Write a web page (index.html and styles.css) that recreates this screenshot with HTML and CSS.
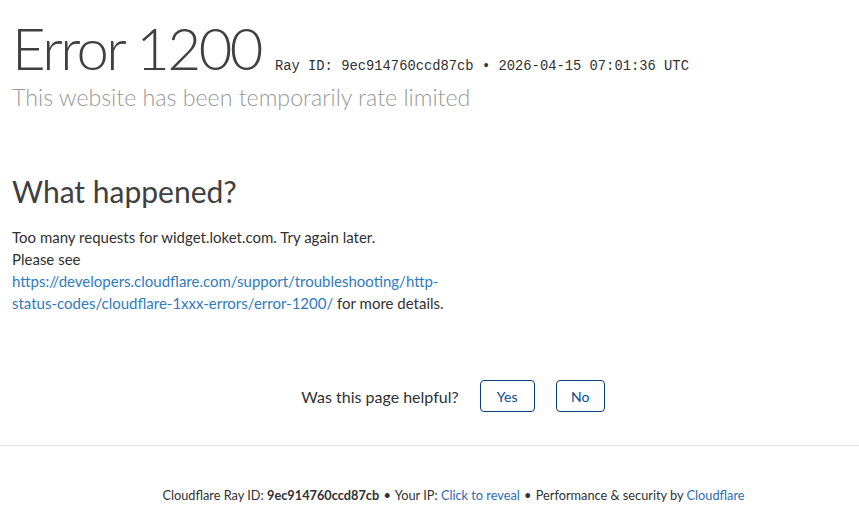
FILE: index.html
```html
<!DOCTYPE html>
<html lang="en">
<head>
<meta charset="utf-8">
<title>Error 1200</title>
<link rel="stylesheet" href="styles.css">
</head>
<body>
<div class="page">
  <header class="hdr">
    <h1 class="title"><span class="code">Error 1200</span><span class="ray">Ray ID: 9ec914760ccd87cb &bull; 2026-04-15 07:01:36 UTC</span></h1>
    <h2 class="subtitle">This website has been temporarily rate limited</h2>
  </header>
  <section class="what">
    <h2 class="what-title">What happened?</h2>
    <p class="what-text">Too many requests for widget.loket.com. Try again later.<br>Please see <a class="link" href="#">https://developers.cloudflare.com/support/troubleshooting/http-status-codes/cloudflare-1xxx-errors/error-1200/</a> for more details.</p>
  </section>
  <div class="feedback">
    <span class="fb-q">Was this page helpful?</span>
    <button class="fb-btn fb-yes">Yes</button>
    <button class="fb-btn fb-no">No</button>
  </div>
  <footer class="footer">
    <p class="foot-line">Cloudflare Ray ID: <strong class="bold">9ec914760ccd87cb</strong> <span class="sep">&bull;</span> Your IP: <a class="flink" href="#">Click to reveal</a> <span class="sep">&bull;</span> Performance &amp; security by <a class="flink" href="#">Cloudflare</a></p>
  </footer>
</div>
</body>
</html>
```
FILE: styles.css
```css
html, body {
  margin: 0;
  padding: 0;
  background: #ffffff;
}
body {
  font-family: Lato, "Open Sans", sans-serif;
  color: #313131;
}
.page {
  width: 859px;
}
.hdr {
  padding: 13px 0 0 12px;
}
.title {
  margin: 0;
  font-weight: 300;
  font-size: 58px;
  line-height: 70px;
  color: #404040;
  white-space: nowrap;
}
.code {
  letter-spacing: -2.5px;
  margin-right: 14px;
}
.ray {
  font-family: "Liberation Mono", "Courier New", monospace;
  font-size: 13.8px;
  line-height: 0;
  font-weight: 400;
  letter-spacing: 0;
  color: #313131;
}
.subtitle {
  margin: 0;
  font-weight: 300;
  font-size: 23.2px;
  line-height: 28px;
  color: #999999;
}
.what {
  padding: 62px 0 0 12px;
  width: 445px;
}
.what-title {
  margin: 0;
  font-weight: 400;
  font-size: 30px;
  line-height: 36px;
  color: #404040;
}
.what-text {
  margin: 17px 0 0 0;
  font-size: 15px;
  line-height: 22px;
  color: #313131;
}
.link {
  color: #2f7bbf;
  text-decoration: none;
}
.feedback {
  margin-top: 66px;
  display: flex;
  justify-content: center;
  align-items: center;
  gap: 21px;
  padding: 0 0 33px 47px;
  border-bottom: 1px solid #e6e6e6;
  font-size: 16px;
}
.fb-q {
  color: #313131;
}
.fb-btn {
  font-family: inherit;
  font-size: 14px;
  color: #0b4a91;
  background: #fff;
  border: 1px solid #0a3e82;
  border-radius: 4px;
  height: 32px;
  padding: 0;
  margin: 0;
  text-align: center;
}
.fb-yes {
  width: 55px;
}
.fb-no {
  width: 49px;
}
.footer {
  padding: 39px 0 0 48px;
}
.foot-line {
  margin: 0;
  text-align: center;
  font-size: 12.75px;
  line-height: 20px;
  color: #313131;
}
.bold {
  font-weight: 700;
}
.sep {
  margin: 0 1px;
}
.flink {
  color: #2c6bb0;
  text-decoration: none;
}
```
